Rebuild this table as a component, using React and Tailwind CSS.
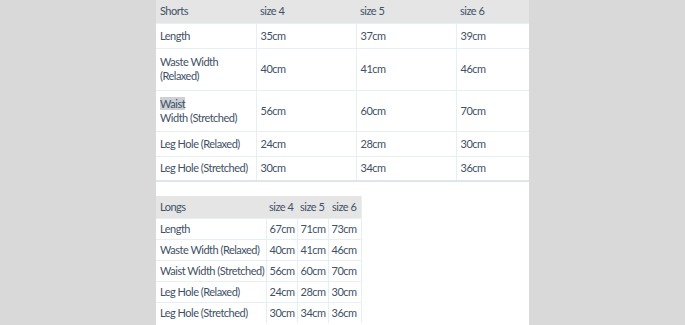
import React from 'react';

const shorts = [
    { label: 'Length', vals: ['35cm', '37cm', '39cm'], h: 'h-[25px]' },
    { label: ['Waste Width', '(Relaxed)'], vals: ['40cm', '41cm', '46cm'], h: 'h-[42px]' },
    { label: ['Waist', 'Width (Stretched)'], vals: ['56cm', '60cm', '70cm'], h: 'h-[41px]', mark: true },
    { label: 'Leg Hole (Relaxed)', vals: ['24cm', '28cm', '30cm'], h: 'h-[25px]' },
    { label: 'Leg Hole (Stretched)', vals: ['30cm', '34cm', '36cm'], h: 'h-[25px]' },
];

const longs = [
    ['Length', '67cm', '71cm', '73cm'],
    ['Waste Width (Relaxed)', '40cm', '41cm', '46cm'],
    ['Waist Width (Stretched)', '56cm', '60cm', '70cm'],
    ['Leg Hole (Relaxed)', '24cm', '28cm', '30cm'],
    ['Leg Hole (Stretched)', '30cm', '34cm', '36cm'],
];

const renderLabel = (row) => {
    if (typeof row.label === 'string') return row.label;
    return (
        <>
            {row.mark ? <span className="bg-[#cdd1d6]">{row.label[0]}</span> : row.label[0]}
            <br />
            {row.label[1]}
        </>
    );
};

export default function App() {
    return (
        <div className="w-[685px] h-[325px] bg-[#d9d9d9] overflow-hidden flex justify-center">
            <div
                className="w-[373px] h-full bg-white text-[#3f5165] text-[11px] leading-[14px] tracking-[-0.5px]"
                style={{ fontFamily: 'Lato, "Open Sans", sans-serif' }}
            >
                <table className="w-full table-fixed border-collapse border-b-2 border-[#dde6ea]">
                    <thead>
                        <tr className="h-[23px] bg-[#e5e5e5]">
                            <th className="w-[100px] px-[4px] text-left font-normal">Shorts</th>
                            <th className="w-[100px] px-[4px] text-left font-normal">size 4</th>
                            <th className="w-[100px] px-[4px] text-left font-normal">size 5</th>
                            <th className="px-[4px] text-left font-normal">size 6</th>
                        </tr>
                    </thead>
                    <tbody>
                        {shorts.map((row, i) => (
                            <tr key={i} className={`${row.h} border-t border-[#e6eff2]`}>
                                <td className="px-[4px] align-middle whitespace-nowrap">{renderLabel(row)}</td>
                                {row.vals.map((v, j) => (
                                    <td key={j} className="px-[4px] border-l border-[#e6eff2] align-middle">{v}</td>
                                ))}
                            </tr>
                        ))}
                    </tbody>
                </table>

                <table className="mt-[14px] table-fixed w-[205px] border-collapse border-r border-[#e6eff2]">
                    <thead>
                        <tr className="h-[22px] bg-[#e5e5e5]">
                            <th className="w-[110px] px-[4px] text-left font-normal">Longs</th>
                            <th className="w-[31px] px-[3px] text-left font-normal whitespace-nowrap">size 4</th>
                            <th className="w-[31px] px-[3px] text-left font-normal whitespace-nowrap">size 5</th>
                            <th className="w-[33px] px-[4px] text-left font-normal whitespace-nowrap">size 6</th>
                        </tr>
                    </thead>
                    <tbody>
                        {longs.map((r, i) => (
                            <tr key={i} className="h-[21px] border-t border-[#e6eff2]">
                                <td className="px-[4px] whitespace-nowrap">{r[0]}</td>
                                {r.slice(1).map((v, j) => (
                                    <td key={j} className="px-[3px] border-l border-[#e6eff2] whitespace-nowrap">{v}</td>
                                ))}
                            </tr>
                        ))}
                    </tbody>
                </table>
            </div>
        </div>
    );
}
